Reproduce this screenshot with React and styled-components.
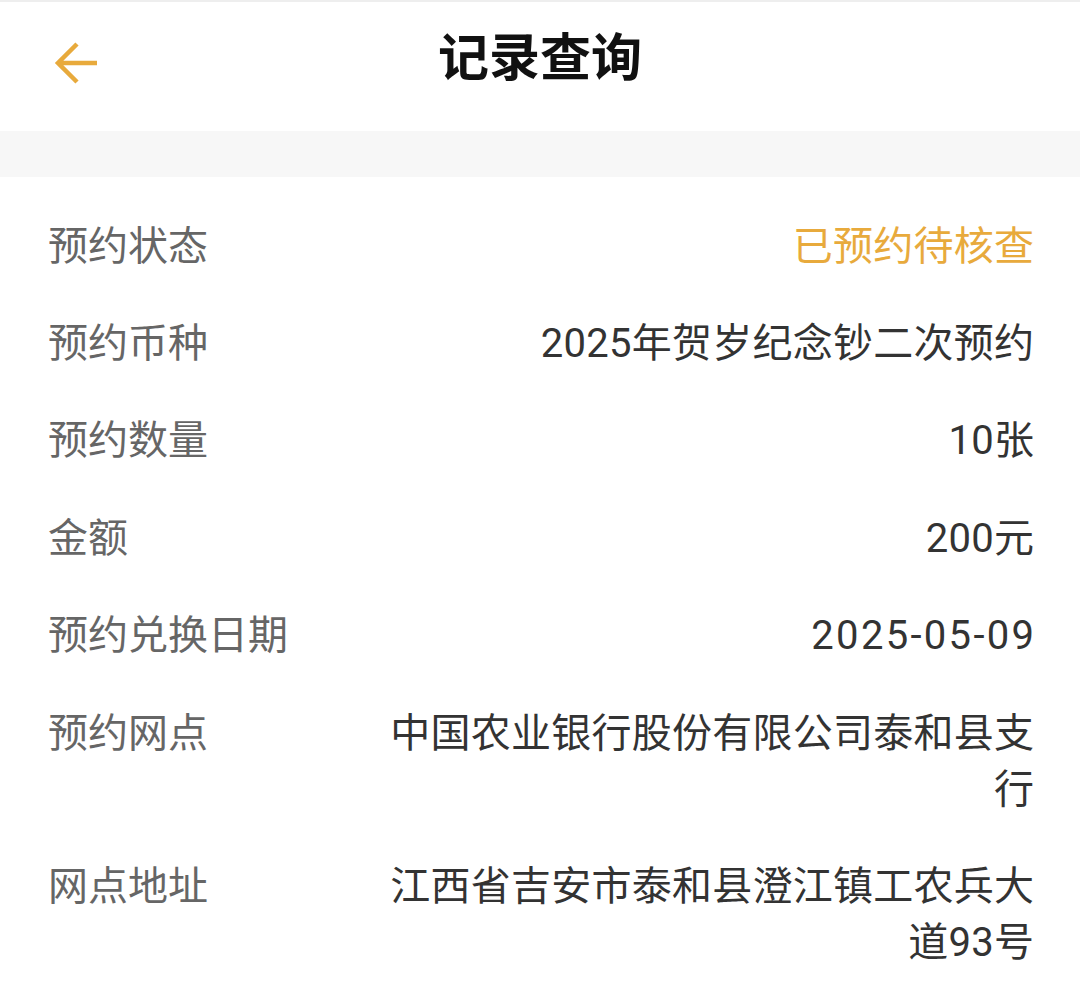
import React from "react";
import styled, { createGlobalStyle } from "styled-components";

const GlobalStyle = createGlobalStyle`
  html, body {
    margin: 0;
    padding: 0;
    background: #ffffff;
  }
  body {
    font-family: Roboto, "Noto Sans CJK SC", sans-serif;
  }
`;

const Page = styled.div`
  width: 1080px;
  min-height: 997px;
  background: #ffffff;
  border-top: 2px solid #eeeeee;
  box-sizing: border-box;
`;

const Header = styled.div`
  height: 129px;
  display: flex;
  align-items: center;
  justify-content: center;
  position: relative;
`;

const BackButton = styled.button`
  position: absolute;
  left: 50px;
  top: 35px;
  width: 52px;
  height: 52px;
  padding: 0;
  border: none;
  background: none;
  display: flex;
  align-items: center;
  justify-content: center;
`;

const Title = styled.h1`
  margin: 0 0 26px;
  font-size: 51px;
  font-weight: 700;
  color: #111111;
  font-family: "Noto Sans CJK SC", sans-serif;
`;

const Band = styled.div`
  height: 46px;
  background: #f7f7f7;
`;

const List = styled.div`
  padding: 21px 46px 0 48px;
`;

const Row = styled.div`
  display: flex;
  justify-content: space-between;
  align-items: flex-start;
  padding: 20.7px 0;
  font-size: 40px;
  line-height: 56px;
`;

const Label = styled.div`
  flex-shrink: 0;
  color: #666666;
`;

const Value = styled.div`
  max-width: 660px;
  text-align: right;
  letter-spacing: ${(p) => (p.$wide ? "2.3px" : "0.25px")};
  margin-right: ${(p) => (p.$wide ? "-2.3px" : "-0.25px")};
  color: ${(p) => (p.$accent ? "#e8aa3c" : "#333333")};
`;

const rows = [
  { label: "预约状态", value: "已预约待核查", accent: true },
  { label: "预约币种", value: "2025年贺岁纪念钞二次预约" },
  { label: "预约数量", value: "10张" },
  { label: "金额", value: "200元" },
  { label: "预约兑换日期", value: "2025-05-09", wide: true },
  { label: "预约网点", value: "中国农业银行股份有限公司泰和县支行" },
  { label: "网点地址", value: "江西省吉安市泰和县澄江镇工农兵大道93号" },
];

export default function App() {
  return (
    <>
      <GlobalStyle />
      <Page>
        <Header>
          <BackButton aria-label="返回">
            <svg width="46" height="46" viewBox="0 0 46 46" fill="none">
              <path
                d="M44 23H5M24 4L5 23L24 42"
                stroke="#e8aa3c"
                strokeWidth="4.5"
              />
            </svg>
          </BackButton>
          <Title>记录查询</Title>
        </Header>
        <Band />
        <List>
          {rows.map((r) => (
            <Row key={r.label}>
              <Label>{r.label}</Label>
              <Value $accent={r.accent} $wide={r.wide}>
                {r.value}
              </Value>
            </Row>
          ))}
        </List>
      </Page>
    </>
  );
}
